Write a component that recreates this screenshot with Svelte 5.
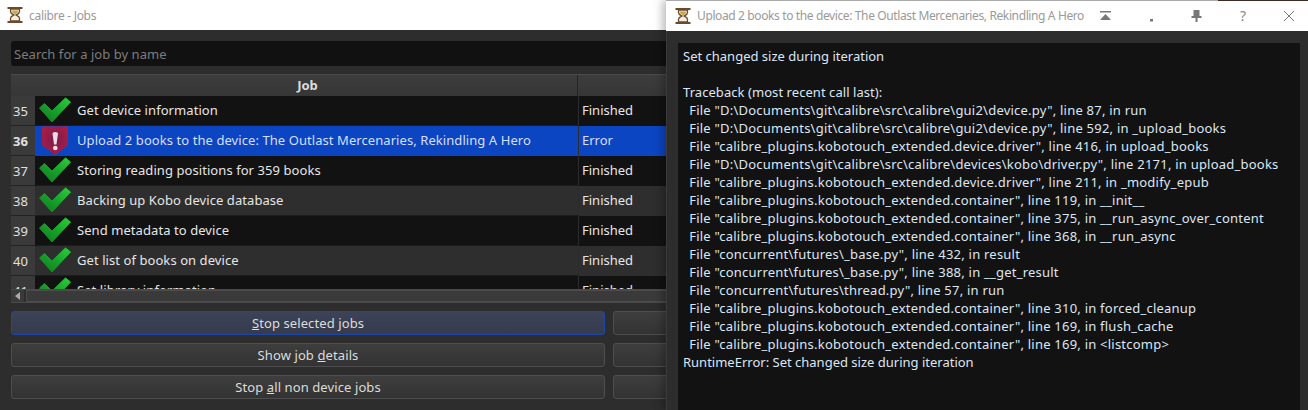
<script>
	const jobs = [
		{ n: 35, name: 'Get device information', status: 'Finished', ok: true },
		{ n: 36, name: 'Upload 2 books to the device: The Outlast Mercenaries, Rekindling A Hero', status: 'Error', ok: false },
		{ n: 37, name: 'Storing reading positions for 359 books', status: 'Finished', ok: true },
		{ n: 38, name: 'Backing up Kobo device database', status: 'Finished', ok: true },
		{ n: 39, name: 'Send metadata to device', status: 'Finished', ok: true },
		{ n: 40, name: 'Get list of books on device', status: 'Finished', ok: true },
		{ n: 41, name: 'Set library information', status: 'Finished', ok: true }
	];

	const trace = [
		'  File "D:\\Documents\\git\\calibre\\src\\calibre\\gui2\\device.py", line 87, in run',
		'  File "D:\\Documents\\git\\calibre\\src\\calibre\\gui2\\device.py", line 592, in _upload_books',
		'  File "calibre_plugins.kobotouch_extended.device.driver", line 416, in upload_books',
		'  File "D:\\Documents\\git\\calibre\\src\\calibre\\devices\\kobo\\driver.py", line 2171, in upload_books',
		'  File "calibre_plugins.kobotouch_extended.device.driver", line 211, in _modify_epub',
		'  File "calibre_plugins.kobotouch_extended.container", line 119, in __init__',
		'  File "calibre_plugins.kobotouch_extended.container", line 375, in __run_async_over_content',
		'  File "calibre_plugins.kobotouch_extended.container", line 368, in __run_async',
		'  File "concurrent\\futures\\_base.py", line 432, in result',
		'  File "concurrent\\futures\\_base.py", line 388, in __get_result',
		'  File "concurrent\\futures\\thread.py", line 57, in run',
		'  File "calibre_plugins.kobotouch_extended.container", line 310, in forced_cleanup',
		'  File "calibre_plugins.kobotouch_extended.container", line 169, in flush_cache',
		'  File "calibre_plugins.kobotouch_extended.container", line 169, in <listcomp>'
	];
</script>

{#snippet hourglass()}
	<svg class="glass" width="16" height="16" viewBox="0 0 16 16">
		<path d="M3.500 2h9v2.500C12.500 7 9.500 7.500 9 8c.5.5 3.500 1 3.500 3.500V14h-9v-2.500C3.500 9 6.500 8.500 7 8c-.5-.5-3.500-1-3.500-3.500z" fill="#f4efe2" stroke="#6b4a2c" stroke-width="1.300" />
		<path d="M4.600 3.500h6.800c0 2-2.200 3-3.400 4C6.800 6.500 4.600 5.500 4.600 3.500z" fill="#c9a84a" />
		<path d="M.5 1h15M.5 15h15" stroke="#6b4a2c" stroke-width="1.800" />
	</svg>
{/snippet}

<div class="desktop">
	<section class="jobs">
		<header class="titlebar">
			{@render hourglass()}
			<span class="title">calibre - Jobs</span>
		</header>
		<div class="body">
			<div class="search">Search for a job by name</div>
			<div class="table">
				<div class="head">
					<div class="corner"></div>
					<div class="hjob">Job</div>
					<div class="hstatus"></div>
				</div>
				<div class="rows">
					{#each jobs as job, i}
						<div class="row" class:alt={i % 2 === 1} class:selected={!job.ok}>
							<div class="num">{job.n}</div>
							<div class="job">
								{#if job.ok}
									<svg class="icon" width="32" height="27" viewBox="0 0 32 27">
										<defs>
											<linearGradient id="tick" x1="0.1" y1="1" x2="0.9" y2="0">
												<stop offset="0" stop-color="#0f7f20" />
												<stop offset="0.5" stop-color="#18a02a" />
												<stop offset="1" stop-color="#2ccb3c" />
											</linearGradient>
										</defs>
										<path d="M.5 11L5.500 6.500 13 14 26.500 1 31.500 5 13 25z" fill="url(#tick)" stroke="url(#tick)" stroke-width="1" stroke-linejoin="round" />
									</svg>
								{:else}
									<svg class="icon" width="32" height="29" viewBox="0 0 32 29">
										<defs>
											<radialGradient id="shield" cx="0.5" cy="0.45" r="0.6">
												<stop offset="0" stop-color="#761c52" />
												<stop offset="1" stop-color="#b01c42" />
											</radialGradient>
										</defs>
										<path d="M3 1.500Q3 .5 4 .5H28Q29 .5 29 1.500V19L16 29 3 19z" fill="url(#shield)" />
										<path d="M13.500 7.500Q13.500 6 16.300 6T19 7.500L17.500 18.500H15z" fill="#f0dde4" />
										<circle cx="16.300" cy="22" r="2.300" fill="#f0dde4" />
									</svg>
								{/if}
								<span class="jobname">{job.name}</span>
							</div>
							<div class="status">{job.status}</div>
						</div>
					{/each}
				</div>
				<div class="scrollbar">
					<div class="arrow"><span></span></div>
					<div class="thumb"></div>
				</div>
			</div>
			<div class="buttons">
				<button class="btn focus"><u>S</u>top selected jobs</button>
				<button class="btn" aria-label="Hide selected jobs"></button>
				<button class="btn">Show job <u>d</u>etails</button>
				<button class="btn" aria-label="Show all jobs"></button>
				<button class="btn">Stop <u>a</u>ll non device jobs</button>
				<button class="btn" aria-label="Hide all jobs"></button>
			</div>
		</div>
	</section>

	<section class="details">
		<div class="topline"></div>
		<header class="titlebar dtitle">
			{@render hourglass()}
			<span class="title grow">Upload 2 books to the device: The Outlast Mercenaries, Rekindling A Hero</span>
			<div class="controls">
				<svg width="14" height="14" viewBox="0 0 14 14"><path d="M2 2h11v1.500H2zM7.500 5L13 11H2z" fill="#777" /></svg>
				<svg width="14" height="14" viewBox="0 0 14 14"><rect x="6" y="10" width="3" height="2.500" fill="#777" /></svg>
				<svg width="14" height="14" viewBox="0 0 14 14"><path d="M3.500 1h6v6h2v2h-4v4h-2V9h-4V7h2z" fill="#777" /></svg>
				<span class="help">?</span>
				<svg width="14" height="14" viewBox="0 0 14 14"><path d="M2 2l10 10M12 2L2 12" stroke="#777" stroke-width="1" fill="none" /></svg>
			</div>
		</header>
		<div class="dbody">
			<div class="log">
				<div class="line">Set changed size during iteration</div>
				<div class="line">&nbsp;</div>
				<div class="line tb">Traceback (most recent call last):</div>
				{#each trace as t}
					<div class="line trace">{t}</div>
				{/each}
				<div class="line">RuntimeError: Set changed size during iteration</div>
			</div>
		</div>
	</section>
</div>

<style>
	:global(body) {
		margin: 0;
		background: #2d2d2d;
	}

	.desktop {
		display: flex;
		width: 1308px;
		height: 410px;
		overflow: hidden;
		font-family: "Noto Sans", "Open Sans", sans-serif;
		font-size: 13px;
		color: #dcdcdc;
	}

	.titlebar {
		display: flex;
		align-items: center;
		gap: 6px;
		height: 30px;
		padding-left: 7px;
		background: #fff;
		box-sizing: border-box;
	}

	.title {
		font-size: 12px;
		letter-spacing: -.3px;
		color: #9a9a9a;
		white-space: nowrap;
	}

	.grow {
		flex: 1;
		letter-spacing: -.38px;
	}

	.jobs {
		width: 666px;
		flex: none;
		overflow: hidden;
	}

	.body {
		height: 380px;
		background: #2d2d2d;
		padding: 11px 0 0 11px;
		box-sizing: border-box;
	}

	.search {
		width: 690px;
		height: 25px;
		line-height: 26px;
		padding-left: 3px;
		box-sizing: border-box;
		background: #111;
		color: #7c7c7c;
		border-radius: 3px;
		letter-spacing: .05px;
	}

	.table {
		margin-top: 8px;
		width: 690px;
	}

	.head {
		display: flex;
		height: 22px;
		background: linear-gradient(#3d3d3d, #363636);
		border-top: 1px solid #4a4a4a;
		box-sizing: border-box;
		font-weight: 700;
		line-height: 21px;
	}

	.corner {
		width: 25px;
	}

	.hjob {
		width: 542px;
		padding-left: 2px;
		text-align: center;
		border-right: 1px solid #252525;
		box-sizing: border-box;
	}

	.hstatus {
		flex: 1;
	}

	.rows {
		height: 193px;
		overflow: hidden;
	}

	.row {
		display: flex;
		height: 30px;
		background: #121212;
		color: #e6e6e6;
	}

	.row.alt {
		background: #2e2e2e;
	}

	.row.selected {
		background: #0c45c2;
		color: #d7dff5;
	}

	.num {
		width: 24px;
		margin-right: 1px;
		flex: none;
		background: #3a3a3a;
		border-bottom: 1px solid #222;
		box-sizing: border-box;
		padding-left: 2px;
		line-height: 30px;
		color: #e0e0e0;
	}

	.row.selected .num {
		font-weight: 700;
	}

	.job {
		display: flex;
		align-items: flex-start;
		width: 543px;
		flex: none;
		padding-left: 3px;
		gap: 6px;
		border-right: 1px solid #2b2b2b;
		border-bottom: 1px solid #1c1c1c;
		box-sizing: border-box;
		white-space: nowrap;
	}

	.row.selected .job {
		border-bottom-color: #0c45c2;
	}

	.row:not(.selected) .icon {
		margin-top: 1px;
	}

	.jobname {
		line-height: 29px;
		letter-spacing: .07px;
	}

	.icon {
		flex: none;
	}

	.status {
		padding-left: 3px;
		line-height: 29px;
	}

	.scrollbar {
		display: flex;
		gap: 1px;
		height: 12px;
		background: #2d2d2d;
		border: 1px solid #4a4a4a;
		border-width: 1px 0;
	}

	.arrow {
		display: flex;
		align-items: center;
		justify-content: center;
		width: 13px;
		background: #3a3a3a;
	}

	.arrow span {
		width: 0;
		height: 0;
		border: 4px solid transparent;
		border-left: 0;
		border-right: 5px solid #aaa;
	}

	.thumb {
		flex: 1;
		margin-left: 1px;
		background: #3a3a3a;
		border: 1px solid #4c4c4c;
	}

	.buttons {
		display: grid;
		grid-template-columns: 594px 100px;
		gap: 8px;
		margin-top: 8px;
	}

	.btn {
		height: 24px;
		padding: 0;
		background: linear-gradient(#3e3e3e, #333);
		border: 1px solid #4e4e4e;
		border-radius: 3px;
		color: #dcdcdc;
		font: inherit;
		letter-spacing: .1px;
	}

	.btn.focus {
		background: linear-gradient(#3c4258, #363b4c);
		border-color: #1d47a8;
	}

	.details {
		flex: 1;
		box-sizing: border-box;
		box-shadow: -4px 0 8px rgba(0, 0, 0, .25);
		position: relative;
	}

	.topline {
		height: 1px;
		background: linear-gradient(90deg, #aaa 552px, #3a2a28 552px);
	}

	.dtitle {
		padding-left: 9px;
		padding-bottom: 1px;
	}

	.controls {
		display: flex;
		align-items: center;
		gap: 32px;
		padding-right: 12px;
	}

	.help {
		color: #888;
		font-size: 14px;
		width: 14px;
		text-align: center;
	}

	.dbody {
		height: 379px;
		background: #2d2d2d;
		border-left: 1px solid #3a3a3a;
		padding: 12px 0 0 11px;
		box-sizing: border-box;
	}

	.log {
		height: 400px;
		margin-right: 8px;
		background: #121212;
		padding: 4px 4px;
		box-sizing: border-box;
		color: #dde6f2;
	}

	.line {
		height: 18px;
		line-height: 18px;
		padding-left: 1px;
		white-space: pre;
	}

	.tb {
		letter-spacing: .06px;
	}

	.trace {
		padding-left: 0;
		letter-spacing: .225px;
	}
</style>
